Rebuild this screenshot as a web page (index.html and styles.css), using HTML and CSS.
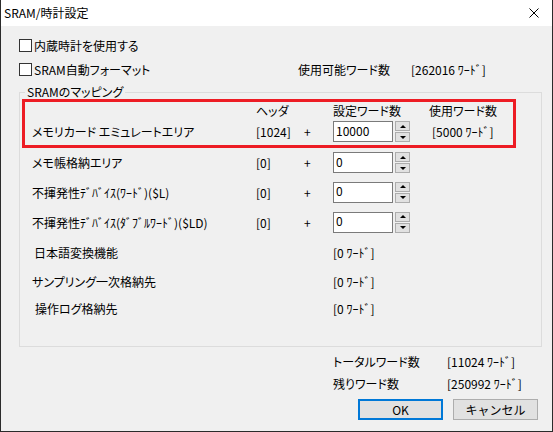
FILE: index.html
```html
<!DOCTYPE html>
<html lang="ja">
<head>
    <meta charset="UTF-8">
    <title>SRAM/時計設定</title>
    <link rel="stylesheet" href="styles.css">
</head>
<body>
    <div class="window">
        <div class="titlebar">
            <span class="title">SRAM/時計設定</span>
            <svg class="close" width="10" height="10" viewBox="0 0 10 10">
                <path d="M0.5 0.5 L9.5 9.5 M9.5 0.5 L0.5 9.5" stroke="#000" stroke-width="1" fill="none"/>
            </svg>
        </div>

        <div class="content">
            <div class="check-row">
                <span class="checkbox"></span>
                <span>内蔵時計を使用する</span>
            </div>
            <div class="check-row">
                <span class="checkbox"></span>
                <span class="check-label">SRAM自動フォーマット</span>
                <span class="avail-label">使用可能ワード数</span>
                <span>[262016 ﾜｰﾄﾞ]</span>
            </div>

            <fieldset class="group">
                <legend>SRAMのマッピング</legend>

                <div class="highlight">
                    <div class="map-row head">
                        <span></span>
                        <span>ヘッダ</span>
                        <span></span>
                        <span>設定ワード数</span>
                        <span class="used-head">使用ワード数</span>
                    </div>
                    <div class="map-row first">
                        <span>メモリカード エミュレートエリア</span>
                        <span>[1024]</span>
                        <span>+</span>
                        <div class="spin">
                            <input type="text" value="10000">
                            <div class="spin-buttons">
                                <span class="spin-btn up"></span>
                                <span class="spin-btn down"></span>
                            </div>
                        </div>
                        <span class="used">[5000 ﾜｰﾄﾞ]</span>
                    </div>
                </div>

                <div class="map-row row2">
                    <span>メモ帳格納エリア</span>
                    <span>[0]</span>
                    <span>+</span>
                    <div class="spin">
                        <input type="text" value="0">
                        <div class="spin-buttons">
                            <span class="spin-btn up"></span>
                            <span class="spin-btn down"></span>
                        </div>
                    </div>
                </div>
                <div class="map-row">
                    <span>不揮発性ﾃﾞﾊﾞｲｽ(ﾜｰﾄﾞ)($L)</span>
                    <span>[0]</span>
                    <span>+</span>
                    <div class="spin">
                        <input type="text" value="0">
                        <div class="spin-buttons">
                            <span class="spin-btn up"></span>
                            <span class="spin-btn down"></span>
                        </div>
                    </div>
                </div>
                <div class="map-row">
                    <span>不揮発性ﾃﾞﾊﾞｲｽ(ﾀﾞﾌﾞﾙﾜｰﾄﾞ)($LD)</span>
                    <span>[0]</span>
                    <span>+</span>
                    <div class="spin">
                        <input type="text" value="0">
                        <div class="spin-buttons">
                            <span class="spin-btn up"></span>
                            <span class="spin-btn down"></span>
                        </div>
                    </div>
                </div>

                <div class="info-row tall">
                    <span class="indent-2">日本語変換機能</span>
                    <span>[0 ﾜｰﾄﾞ]</span>
                </div>
                <div class="info-row mid">
                    <span>サンプリング一次格納先</span>
                    <span>[0 ﾜｰﾄﾞ]</span>
                </div>
                <div class="info-row short">
                    <span class="indent-3">操作ログ格納先</span>
                    <span>[0 ﾜｰﾄﾞ]</span>
                </div>
            </fieldset>

            <div class="totals">
                <span>トータルワード数</span>
                <span>[11024 ﾜｰﾄﾞ]</span>
                <span>残りワード数</span>
                <span>[250992 ﾜｰﾄﾞ]</span>
            </div>

            <div class="buttons">
                <button class="btn default">OK</button>
                <button class="btn">キャンセル</button>
            </div>
        </div>
    </div>
</body>
</html>
```

FILE: styles.css
```css
body {
    margin: 0;
    padding: 0;
    background-color: #f0f0f0;
    font-family: "Noto Sans CJK JP", "Noto Sans", sans-serif;
    font-size: 12px;
    color: #000;
}

.window {
    width: 553px;
    height: 432px;
    box-sizing: border-box;
    border: 1px solid #2b2b2b;
    border-top: none;
    background-color: #f0f0f0;
    font-feature-settings: "palt";
}

.titlebar {
    height: 26px;
    background-color: #fff;
    display: flex;
    align-items: center;
    justify-content: space-between;
    padding: 0 13px 0 3px;
}

.title {
    font-size: 12px;
    line-height: 14px;
}

.close {
    display: block;
}

.content {
    padding: 7px 10px 0 18px;
}

.check-row {
    height: 24px;
    display: flex;
    align-items: center;
}

.checkbox {
    width: 13px;
    height: 13px;
    box-sizing: border-box;
    border: 1px solid #333;
    background-color: #fff;
    margin-right: 2px;
}

.check-label {
    width: 264px;
}

.avail-label {
    width: 113px;
}

/* グループ枠 */
.group {
    margin: 4px 0 0;
    padding: 0 0 25px;
    border: 1px solid #dcdcdc;
    min-width: 0;
}

.group legend {
    padding: 0 2px;
    margin-left: 5px;
    line-height: 14px;
}

.highlight {
    margin-left: 2px;
    width: 494px;
    box-sizing: border-box;
    border: 3px solid #ed1c24;
    padding-left: 7px;
}

.map-row {
    display: grid;
    grid-template-columns: 224px 48px 29px 77px auto;
    align-items: center;
    height: 30px;
    padding-left: 12px;
}

.highlight .map-row {
    padding-left: 0;
}

.map-row.head {
    height: 16px;
}

.map-row.first {
    height: 27px;
}

.map-row.row2 {
    height: 29px;
}

.used-head {
    padding-left: 19px;
}

.used {
    padding-left: 22px;
}

.spin {
    display: flex;
    align-items: center;
    gap: 2px;
}

.spin input {
    width: 60px;
    height: 21px;
    box-sizing: border-box;
    border: 1px solid #7a7a7a;
    background-color: #fff;
    padding: 0 2px 3px;
    margin: 0;
    font-family: inherit;
    font-size: 12px;
    color: #000;
    outline: none;
}

.spin-buttons {
    display: flex;
    flex-direction: column;
    gap: 1px;
}

.spin-btn {
    width: 15px;
    height: 10px;
    box-sizing: border-box;
    border: 1px solid #adadad;
    background-color: #e1e1e1;
    display: flex;
    align-items: center;
    justify-content: center;
}

.spin-btn::after {
    content: "";
    width: 0;
    height: 0;
    border-left: 3px solid transparent;
    border-right: 3px solid transparent;
}

.spin-btn.up::after {
    border-bottom: 3px solid #000;
}

.spin-btn.down::after {
    border-top: 3px solid #000;
}

.info-row {
    display: grid;
    grid-template-columns: 301px auto;
    align-items: center;
    padding-left: 12px;
    height: 30px;
}

.info-row.mid {
    height: 28px;
}

.info-row.short {
    height: 26px;
}

.indent-2 {
    padding-left: 2px;
}

.indent-3 {
    padding-left: 3px;
}

.totals {
    display: grid;
    grid-template-columns: 114px auto;
    grid-auto-rows: 22px;
    align-items: center;
    padding: 3px 0 0 314px;
}

.buttons {
    display: flex;
    justify-content: flex-end;
    gap: 10px;
    margin-top: 5px;
    padding-right: 4px;
}

.btn {
    width: 85px;
    height: 21px;
    box-sizing: border-box;
    border: 1px solid #adadad;
    background-color: #e1e1e1;
    font-family: inherit;
    font-size: 12px;
    padding: 0;
    color: #000;
}

.btn.default {
    border: 2px solid #0078d7;
}
```
